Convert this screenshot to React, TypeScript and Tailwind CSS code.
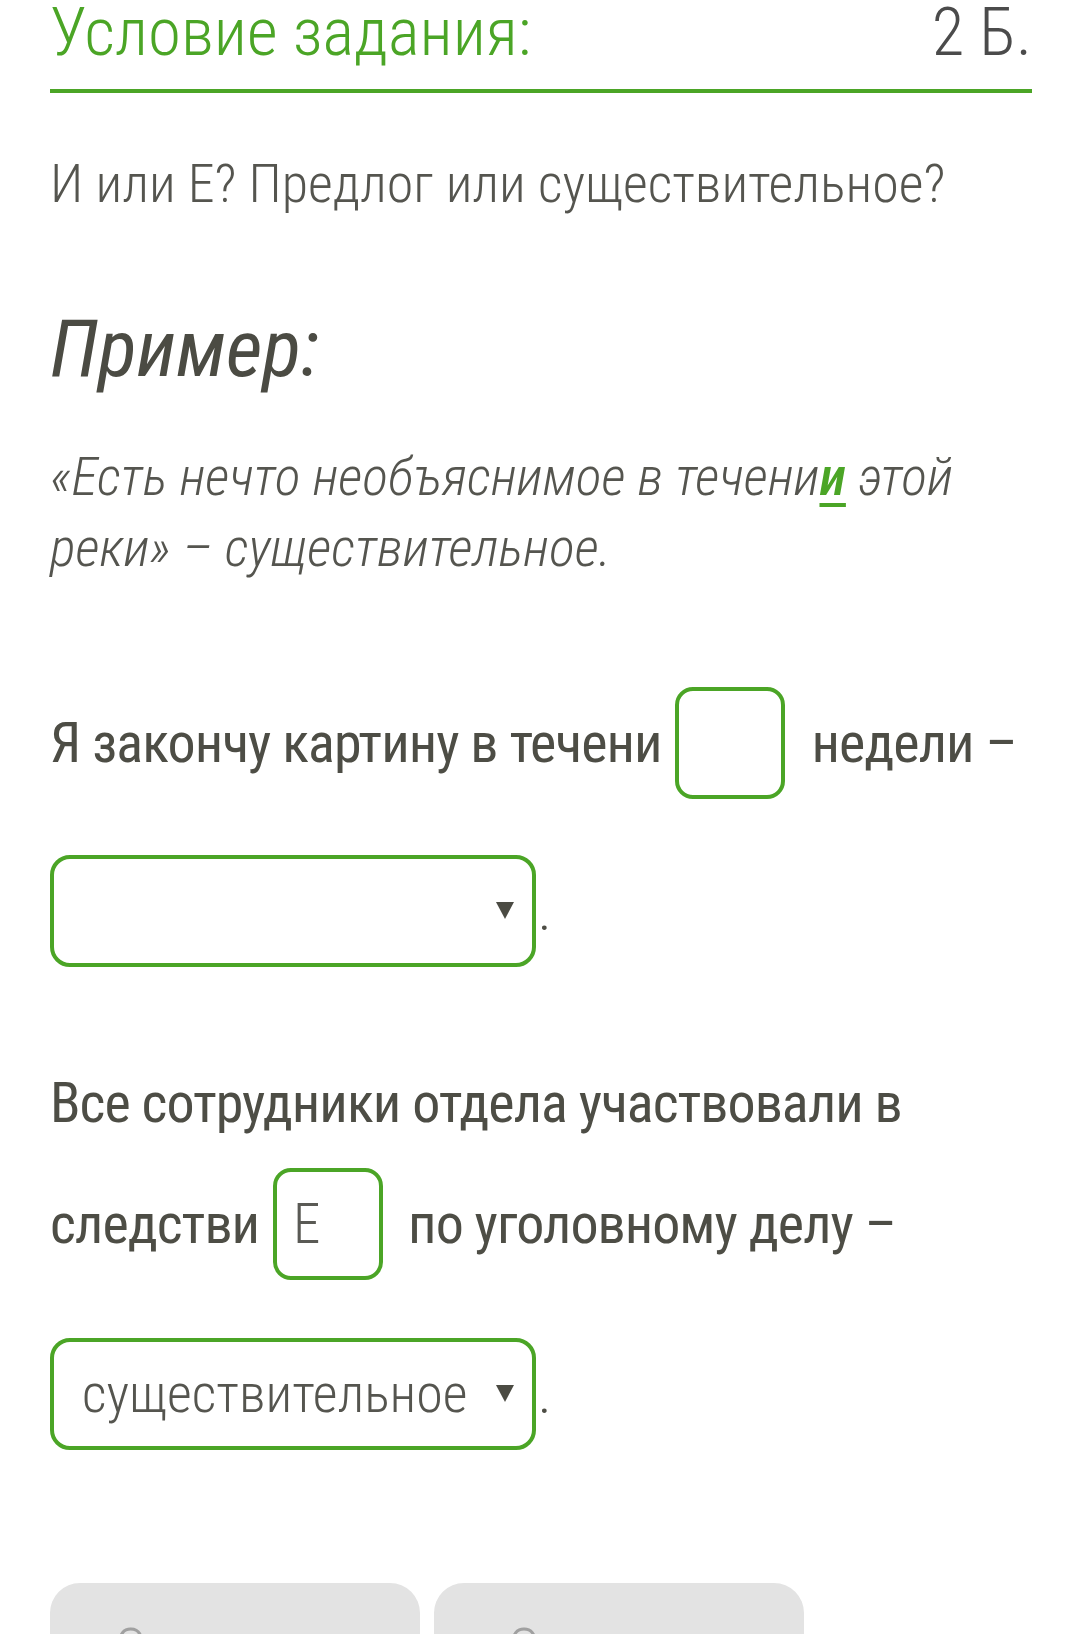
const green = "text-[#4ba526]"

function Blank({ value }: { value?: string }) {
  return (
    <div className="flex h-[112px] w-[110px] shrink-0 items-center rounded-[18px] border-[4px] border-[#4ba526] bg-white pl-[16px]">
      <span className="text-[55px] leading-none font-light text-[#5a5a55]">{value}</span>
    </div>
  )
}

function Select({ value }: { value?: string }) {
  return (
    <div className="flex h-[112px] w-[486px] shrink-0 items-center justify-between rounded-[20px] border-[4px] border-[#4ba526] bg-white pl-[28px] pr-[18px]">
      <span className="text-[54px] leading-none font-light text-[#55554f]">{value}</span>
      <svg width="18" height="18" viewBox="0 0 18 18" className="mt-[-2px]">
        <polygon points="0,1 18,1 9,18" fill="#4b4b43" />
      </svg>
    </div>
  )
}

export default function App() {
  return (
    <div
      className="h-[1634px] overflow-hidden bg-white pl-[50px] pr-[48px] text-[#4d4d45] font-stretch-[75%]"
      style={{ fontFamily: "Roboto, 'Noto Sans', sans-serif" }}
    >
      {/* Header */}
      <div className="flex items-start justify-between">
        <h2 className={`text-[67px] leading-[64px] font-light ${green}`}>Условие задания:</h2>
        <span className="text-[67px] leading-[64px] font-light text-[#4b4b4b]">2 Б.</span>
      </div>
      <div className="mt-[25px] h-[4px] w-full bg-[#4ba526]" />

      {/* Question */}
      <p className="mt-[58px] text-[54px] leading-[66px] font-light text-[#55554f]">
        И или Е? Предлог или существительное?
      </p>

      {/* Example */}
      <h3 className="mt-[84px] text-[80px] leading-[96px] font-normal italic text-[#4b4b43]">Пример:</h3>
      <p className="mt-[44px] text-[54px] leading-[71px] font-light italic text-[#55554f]">
        «Есть нечто необъяснимое в течени
        <span className={`font-medium underline decoration-[4px] underline-offset-[8px] ${green}`}>и</span> этой
        реки» – существительное.
      </p>

      {/* Task 1 */}
      <div className="mt-[104px] flex items-center whitespace-nowrap text-[56px] leading-[68px] font-normal tracking-[-1px]">
        <span>Я закончу картину в течени</span>
        <div className="ml-[14px] mr-[26px]">
          <Blank />
        </div>
        <span>недели –</span>
      </div>
      <div className="mt-[56px] flex items-center text-[56px] leading-[68px]">
        <Select />
        <span className="ml-[2px] font-light">.</span>
      </div>

      {/* Task 2 */}
      <p className="mt-[102px] whitespace-nowrap text-[56px] leading-[68px] font-normal tracking-[-1px]">
        Все сотрудники отдела участвовали в
      </p>
      <div className="mt-[31px] flex items-center whitespace-nowrap text-[56px] leading-[68px] font-normal tracking-[-1px]">
        <span>следстви</span>
        <div className="ml-[14px] mr-[25px]">
          <Blank value="Е" />
        </div>
        <span>по уголовному делу –</span>
      </div>
      <div className="mt-[58px] flex items-center text-[56px] leading-[68px]">
        <Select value="существительное" />
        <span className="ml-[2px] font-light">.</span>
      </div>

      {/* Actions */}
      <div className="mt-[133px] flex gap-[14px]">
        <button className="h-[120px] w-[370px] rounded-[30px] bg-[#e3e3e3] pt-[12px] text-[56px] leading-[68px] font-light text-[#a0a0a0]">
          Сохранить
        </button>
        <button className="h-[120px] w-[370px] rounded-[30px] bg-[#e3e3e3] pt-[12px] text-[56px] leading-[68px] font-light text-[#a0a0a0]">
          Отменить
        </button>
      </div>
    </div>
  )
}
